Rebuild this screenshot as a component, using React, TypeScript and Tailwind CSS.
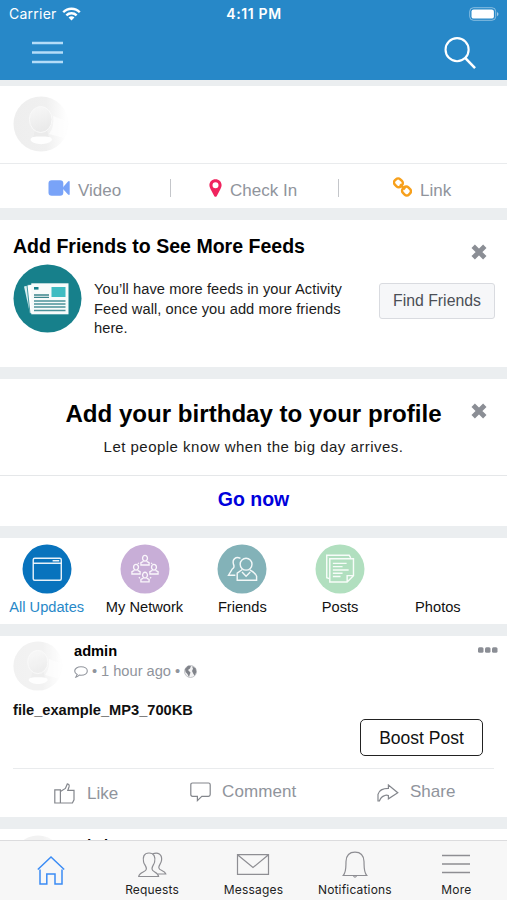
import React from 'react';

const font = "font-['Liberation_Sans',Arial,sans-serif]";

function Avatar() {
  return (
    <svg className="w-[56px] h-[56px] shrink-0" viewBox="0 0 56 56">
      <defs>
        <linearGradient id="avatarBg" x1="0" y1="0" x2="1" y2="0">
          <stop offset="0" stopColor="#eeeeee" />
          <stop offset="0.6" stopColor="#f0f0f0" />
          <stop offset="0.95" stopColor="#fefefe" />
        </linearGradient>
        <linearGradient id="avatarHead" x1="0" y1="0" x2="0.3" y2="1">
          <stop offset="0" stopColor="#f8f8f8" />
          <stop offset="1" stopColor="#eaeaea" />
        </linearGradient>
      </defs>
      <circle cx="28" cy="28" r="27.5" fill="url(#avatarBg)" />
      <path d="M36 38 C40 33 41 26 40 20 L56 26 L51 42 Z" fill="#fdfdfd" opacity="0.75" />
      <path d="M22 34 H34 L36 42 H20 Z" fill="#ebebeb" />
      <ellipse cx="27.7" cy="23.5" rx="11.3" ry="13" fill="url(#avatarHead)" stroke="#f9f9f9" />
      <path d="M17.5 44 C17.5 40.5 22 40.5 28 40.5 C34 40.5 39 40.5 39 44 C36 49.5 20 49.5 17.5 44 Z" fill="#fefefe" />
    </svg>
  );
}

function CloseIcon() {
  return (
    <svg className="w-[16px] h-[16px]" viewBox="0 0 16 16" stroke="#8b8e95" strokeWidth="4.8" fill="none">
      <path d="M2.2 2.2 L13.8 13.8 M13.8 2.2 L2.2 13.8" />
    </svg>
  );
}

function StatusBar() {
  return (
    <div className="h-[27px] grid grid-cols-3 items-center pl-[9px] pr-[8px] text-white font-['Inter',sans-serif] text-[14px]">
      <div className="flex items-center gap-[5px]">
        <span className="tracking-[0.25px]">Carrier</span>
        <svg className="w-[19px] h-[14px]" viewBox="0 0 20 14" fill="none" stroke="#fff" strokeWidth="2.5">
          <path d="M1.3 5.2 C6 0.3 14 0.3 18.7 5.2" />
          <path d="M4.6 8.4 C7.6 5.4 12.4 5.4 15.4 8.4" />
          <path d="M10 13.8 L6.9 10.6 C8.6 9 11.4 9 13.1 10.6 Z" fill="#fff" stroke="none" />
        </svg>
      </div>
      <span className="text-center font-semibold tracking-[0.65px]">4:11 PM</span>
      <svg className="w-[30px] h-[14px] justify-self-end" viewBox="0 0 30 14">
        <rect x="0.7" y="0.7" width="26" height="12.6" rx="3.8" fill="none" stroke="#fff" strokeOpacity="0.45" />
        <rect x="2.5" y="2.4" width="22.4" height="9.2" rx="2.2" fill="#fff" />
        <path d="M28 5 C30 5.8 30 8.4 28 9.2 Z" fill="#fff" fillOpacity="0.55" />
      </svg>
    </div>
  );
}

function Header() {
  return (
    <header className="h-[80px] shrink-0 bg-[#2788c8]">
      <StatusBar />
      <div className="flex items-start justify-between pl-[32px] pr-[31px]">
        <svg className="w-[31px] h-[24px] mt-[14px]" viewBox="0 0 31 24" stroke="#b4dcf8" strokeWidth="2.4">
          <path d="M0 2 H31 M0 11.5 H31 M0 21 H31" />
        </svg>
        <svg className="w-[32px] h-[32px] mt-[10px]" viewBox="0 0 33 33" fill="none" stroke="#fff" strokeWidth="2.2">
          <circle cx="13.5" cy="13.1" r="11.9" />
          <path d="M21.8 21.5 L32 32" strokeWidth="2.6" />
        </svg>
      </div>
    </header>
  );
}

function Composer() {
  return (
    <section className="bg-white">
      <div className="h-[78px] pt-[10px] pl-[13px] border-b border-[#e9ebed]">
        <Avatar />
      </div>
      <div className="h-[44px] flex items-center text-[17px] text-[#90949c]">
        <div className="w-[170px] flex items-center gap-[8px] pl-[48px] pt-[9px]">
          <svg className="w-[22px] h-[16px] -mt-[5px]" viewBox="0 0 22 16" fill="#79a3f8">
            <rect x="0.5" y="0.3" width="14.8" height="15.4" rx="3.2" />
            <path d="M15 7.2 L20 1.4 Q21.7 0.4 21.7 2 V14 Q21.7 15.6 20 14.6 L15 9 Z" />
          </svg>
          <span>Video</span>
        </div>
        <div className="w-px h-[18px] mt-[4px] bg-[#c4c6ca]" />
        <div className="w-[167px] flex items-center gap-[8px] pl-[38px] pt-[9px]">
          <svg className="w-[13px] h-[18px] -mt-[5px]" viewBox="0 0 13 18" fill="#f0245e" fillRule="evenodd">
            <path d="M6.5 0.2 C10.1 0.2 12.6 2.8 12.6 6.2 C12.6 8 11.6 9.6 10.7 11.4 L7.8 16.9 Q6.5 18.7 5.2 16.9 L2.3 11.4 C1.4 9.6 0.4 8 0.4 6.2 C0.4 2.8 2.9 0.2 6.5 0.2 Z M6.5 3.3 A3 3 0 1 0 6.5 9.3 A3 3 0 1 0 6.5 3.3 Z" />
          </svg>
          <span>Check In</span>
        </div>
        <div className="w-px h-[18px] mt-[4px] bg-[#c4c6ca]" />
        <div className="flex-1 flex items-center gap-[8px] pl-[54px] pt-[9px]">
          <svg className="w-[19px] h-[20px] -mt-[7px]" viewBox="0 0 19 20" fill="none" stroke="#f7a01c" strokeWidth="2.5">
            <rect x="-4.2" y="-3.8" width="8.4" height="7.6" rx="3" transform="translate(5.4 5.8) rotate(45)" />
            <rect x="-4.2" y="-3.8" width="8.4" height="7.6" rx="3" transform="translate(13.5 14) rotate(45)" />
            <path d="M7 7.3 L12 12.4" />
          </svg>
          <span>Link</span>
        </div>
      </div>
    </section>
  );
}

function NewsIcon() {
  return (
    <svg className="w-[69px] h-[69px] shrink-0" viewBox="0 0 69 69">
      <circle cx="34.5" cy="34.5" r="34" fill="#17808b" />
      <path d="M11 22.5 L17 21 V49.5 Z" fill="#d9eef0" />
      <path d="M14 21 L20 20 V50 L17 49.5 Z" fill="#fff" stroke="#17808b" strokeWidth="0.8" />
      <rect x="18.3" y="19.3" width="37.2" height="31" fill="#f7fbfb" />
      <rect x="21" y="23" width="4.5" height="2.6" fill="#17808b" />
      <rect x="38.5" y="23" width="14" height="10" fill="#3fbcc2" />
      <path d="M21 31 H36 M21 33.4 H36" stroke="#3a858c" strokeWidth="1.4" />
      <path d="M21 37 H52.5 M21 40 H52.5 M21 43 H52.5 M21 46.5 H52.5" stroke="#4b9299" strokeWidth="1.7" />
    </svg>
  );
}

function AddFriendsCard() {
  return (
    <section className="h-[147px] bg-white pl-[13px] pr-[12px]">
      <div className="flex justify-between pt-[14px]">
        <h2 className="text-[19.55px] leading-[24px] font-bold text-black">Add Friends to See More Feeds</h2>
        <button className="mt-[10px] mr-[8px] h-[16px]"><CloseIcon /></button>
      </div>
      <div className="flex items-start mt-[4px]">
        <NewsIcon />
        <p className="w-[262px] ml-[12px] mt-[16px] text-[14.65px] tracking-[0.07px] leading-[19.5px] text-[#1b1b1b]">
          You’ll have more feeds in your Activity Feed wall, once you add more friends here.
        </p>
        <button className="ml-auto mt-[19px] w-[116px] h-[36px] rounded-[3px] border border-[#d9dbe0] bg-[#f6f7f9] text-[15.8px] text-[#4b4f56]">
          Find Friends
        </button>
      </div>
    </section>
  );
}

function BirthdayCard() {
  return (
    <section className="bg-white">
      <div className="relative h-[97px] pt-[20px] text-center border-b border-[#e5e7e9]">
        <h2 className="text-[24.1px] leading-[30px] font-bold text-black">Add your birthday to your profile</h2>
        <p className="mt-[8px] text-[15px] tracking-[0.48px] leading-[20px] text-[#1b1b1b]">Let people know when the big day arrives.</p>
        <button className="absolute right-[20px] top-[24px] h-[16px]"><CloseIcon /></button>
      </div>
      <div className="h-[50px] pt-[11px] text-center text-[19.5px] leading-[24px] font-bold text-[#0000dc]">Go now</div>
    </section>
  );
}

function Person({ x, y }: { x: number; y: number }) {
  return (
    <g transform={`translate(${x} ${y})`}>
      <ellipse cx="0" cy="-2" rx="2.4" ry="2.8" />
      <path d="M-1.5 1 L-4 2.2 V4.6 H4 V2.2 L1.5 1" />
    </g>
  );
}

const filters = [
  {
    label: 'All Updates',
    fill: '#0873bd',
    icon: (
      <>
        <rect x="11" y="14" width="27.5" height="21.5" rx="1.5" />
        <path d="M11 18.8 H38.5 M30 16.4 H36.5" />
      </>
    ),
  },
  {
    label: 'My Network',
    fill: '#c8aed7',
    icon: (
      <g strokeWidth="1.3">
        <Person x={24.5} y={16} />
        <Person x={15.7} y={24.8} />
        <Person x={33.3} y={24.8} />
        <Person x={24.5} y={32.5} />
        <path d="M18.5 18.5 L17.5 19.5 M30.5 18.5 L31.5 19.5 M18.5 32.5 L19.5 33.5 M30.5 32.5 L29.5 33.5" />
      </g>
    ),
  },
  {
    label: 'Friends',
    fill: '#83b2b8',
    icon: (
      <>
        <circle cx="28.5" cy="19.8" r="5.8" />
        <path d="M24.8 25 L19.8 28.6 V35.5 H38.8 V31.5 Q37.5 28 32.2 25.5 M24.5 27.5 L28.5 31.5 L32.6 27.5" />
        <path d="M23 14.2 C18.5 11.8 14.6 15 16.2 20 C17.4 22.5 16.8 23.4 15 24.5 L11.3 30.6 H18" />
      </>
    ),
  },
  {
    label: 'Posts',
    fill: '#b1dfbf',
    icon: (
      <>
        <path d="M14.5 14.5 H37.7 V31 L31.5 37.3 H14.5 Z M37.7 31 H31.5 V37.3" />
        <path d="M14 34 L11.5 33 V11 H33.5 L35 13.5" />
        <path d="M17.5 19 H31 M17.5 22.2 H27 M17.5 25.4 H33 M17.5 28.6 H27 M17.5 31.8 H25" />
      </>
    ),
  },
  { label: 'Photos', fill: 'none', icon: null },
];

function Filters() {
  return (
    <section className="h-[86px] bg-white pt-[6px] flex">
      {filters.map((f, i) => (
        <div key={f.label} className="w-[97.8px] first:-ml-[2.2px] shrink-0 flex flex-col items-center">
          <svg className="w-[50px] h-[50px]" viewBox="0 0 49 49" fill="none" stroke="#fff" strokeOpacity="0.9" strokeWidth="1.4">
            <circle cx="24.5" cy="24.5" r="24" fill={f.fill} stroke="none" />
            {f.icon}
          </svg>
          <span className={`mt-[4px] text-[14.65px] leading-[18px] whitespace-nowrap ${i === 0 ? 'text-[#2788c8]' : 'text-[#111]'}`}>
            {f.label}
          </span>
        </div>
      ))}
    </section>
  );
}

function PostHeader({ compact }: { compact?: boolean }) {
  return (
    <div className="flex pt-[4px]">
      <div className="mt-[1px] w-[50px] h-[50px] opacity-80 [&>svg]:w-[50px] [&>svg]:h-[50px]"><Avatar /></div>
      <div className="ml-[11px]">
        <div className="mt-[3px] text-[14.65px] leading-[17px] font-bold text-black">admin</div>
        {!compact && (
          <div className="flex items-center mt-[3px] text-[14.65px] leading-[17px] text-[#90949c]">
            <svg className="w-[14px] h-[12px] mt-[1px]" viewBox="0 0 14 12" fill="none" stroke="#90949c" strokeWidth="1.1">
              <path d="M7 0.8 C10.6 0.8 13.3 2.6 13.3 5 C13.3 7.4 10.6 9.2 7 9.2 L5.3 9 Q4 10.8 1.8 11.2 L3.2 8.4 C1.6 7.6 0.7 6.4 0.7 5 C0.7 2.6 3.4 0.8 7 0.8 Z" />
            </svg>
            <span className="ml-[4px] w-[5px]">•</span>
            <span className="ml-[4px]">1 hour ago</span>
            <span className="ml-[4px] w-[5px]">•</span>
            <svg className="w-[13px] h-[13px] ml-[4px]" viewBox="0 0 13 13">
              <circle cx="6.5" cy="6.5" r="6" fill="#f2f2f3" stroke="#b4b6bb" strokeWidth="0.8" />
              <path d="M1 4 L4 0.8 L7 1 L6 3.6 L4 5 L6.5 7.5 L5.6 10 L5 12 L3.4 9 L1.5 7 Z" fill="#80838a" />
              <path d="M8 1.3 L11.6 3.3 L12.4 7 L10.5 10.8 L9.2 8.6 L8 6 L9 3.8 Z" fill="#80838a" />
            </svg>
          </div>
        )}
      </div>
      {!compact && (
        <svg className="ml-auto -mr-[4px] mt-[7px] w-[20px] h-[6px]" viewBox="0 0 20 6" fill="#8b8e95">
          <rect x="0" y="0.2" width="5.5" height="5.5" rx="1.5" />
          <rect x="7" y="0.2" width="5.5" height="5.5" rx="1.5" />
          <rect x="14" y="0.2" width="5.5" height="5.5" rx="1.5" />
        </svg>
      )}
    </div>
  );
}

function Post() {
  return (
    <section className="h-[181px] bg-white px-[13px]">
      <PostHeader />
      <div className="mt-[10px] text-[14.65px] leading-[18px] font-bold text-[#111]">file_example_MP3_700KB</div>
      <div className="flex justify-end">
        <button className="w-[123px] h-[37px] mr-[11px] pt-px rounded-[5px] border-[1.5px] border-[#222] text-[17.5px] text-[#111]">
          Boost Post
        </button>
      </div>
      <div className="flex mt-[12px] border-t border-[#e9ebed] text-[17px] leading-[20px] text-[#90949c]">
        <div className="w-[136px] pl-[41px] flex items-start">
          <svg className="w-[21px] h-[21px] mt-[14px]" viewBox="0 0 21 21" fill="none" stroke="#83868c" strokeWidth="1.2">
            <path d="M0.8 6.8 H6.4 V20 H0.8 Z M6.4 8.6 L11.4 5.4 L13.3 0.9 Q15.8 1.2 15 4 L13.8 7.3 H20 V16.8 L18.4 20 H6.4" />
          </svg>
          <span className="ml-[12px] mt-[15px]">Like</span>
        </div>
        <div className="w-[188px] pl-[41px] flex items-start">
          <svg className="w-[21px] h-[20px] mt-[13px]" viewBox="0 0 21 20" fill="none" stroke="#83868c" strokeWidth="1.2">
            <path d="M2.5 1 H18.5 Q20.2 1 20.2 2.7 V12.6 Q20.2 14.3 18.5 14.3 H11.8 L7.4 18.6 V14.3 H2.5 Q0.8 14.3 0.8 12.6 V2.7 Q0.8 1 2.5 1 Z" />
          </svg>
          <span className="ml-[11px] mt-[13px] tracking-[0.1px]">Comment</span>
        </div>
        <div className="pl-[40px] flex items-start">
          <svg className="w-[22px] h-[18px] mt-[15px]" viewBox="0 0 22 18" fill="none" stroke="#83868c" strokeWidth="1.2">
            <path d="M11.4 4.4 V1 L20.8 8.8 L11.4 14.8 V11.6 C10 10.8 8.6 11 7.6 11.6 C4.5 12.4 3.4 14 2.4 17 H1 V10.4 C2 6.6 6 4.4 11.4 4.4 Z" />
          </svg>
          <span className="ml-[11px] mt-[13px]">Share</span>
        </div>
      </div>
    </section>
  );
}

const tabs = [
  {
    label: 'Requests',
    icon: (
      <>
        <path d="M11 1 C5.8 1 4.6 5 5.6 10 C6 12.5 8.6 14 8.4 17 C8.2 20.4 1.4 19.5 0.7 24.5 H20.6 C20 19.5 14.2 20.4 14 17 C13.8 14 16.2 12.5 16.6 10 C17.6 5 16.2 1 11 1 Z" />
        <path d="M14.5 1.8 C20 -0.2 24.2 2 23.6 8 C23.2 12 20.6 13 20.8 15.8 C21 19 26.8 18 27.8 22 H20" />
      </>
    ),
  },
  { label: 'Messages', icon: <path d="M-1.5 2.7 H29.5 V22.3 H-1.5 Z L14 15.5 L29.5 2.7" /> },
  {
    label: 'Notifications',
    icon: (
      <>
        <path d="M2.3 23.5 C5.4 20 4.8 15 5 9.5 C5.3 3.5 8.5 0.2 14 0.2 C19.5 0.2 22.7 3.5 23 9.5 C23.2 15 22.6 20 25.7 23.5 Z" />
        <path d="M12.5 24 Q14 26.2 15.5 24" />
      </>
    ),
  },
  { label: 'More', icon: <path d="M0 3.5 H28 M0 12 H28 M0 20.5 H28" strokeWidth="1.5" /> },
];

function TabBar() {
  return (
    <nav className="h-[60px] shrink-0 grid grid-cols-5 border-t border-[#dcdcde] bg-[#f7f7f7] font-['Inter',sans-serif] text-[12px] leading-[14px] text-[#222]">
      <div className="flex justify-center pt-[14px]">
        <svg className="w-[28px] h-[30px]" viewBox="0 0 28 30" fill="none" stroke="#3b8cf5" strokeWidth="1.5">
          <path d="M0.8 14.5 L14 2 L27.2 14.5" />
          <path d="M3 14.5 V29 H9.8 V19 H18 V29 H25 V14.5" />
        </svg>
      </div>
      {tabs.map((tab) => (
        <div key={tab.label} className="flex flex-col items-center pt-[11px]">
          <svg className="w-[28px] h-[26px] overflow-visible" viewBox="0 0 28 26" fill="none" stroke="#8e8e93" strokeWidth="1.2">
            {tab.icon}
          </svg>
          <span className="mt-[5px] tracking-[0.18px]">{tab.label}</span>
        </div>
      ))}
    </nav>
  );
}

export default function App() {
  return (
    <div className={`w-[507px] h-[900px] flex flex-col overflow-hidden bg-[#ebeef0] ${font}`}>
      <Header />
      <main className="flex-1 min-h-0 overflow-hidden flex flex-col gap-[12px] pt-[6px] [&>*]:shrink-0">
        <Composer />
        <AddFriendsCard />
        <BirthdayCard />
        <Filters />
        <Post />
        <section className="bg-white px-[13px] pt-px">
          <PostHeader compact />
        </section>
      </main>
      <TabBar />
    </div>
  );
}
